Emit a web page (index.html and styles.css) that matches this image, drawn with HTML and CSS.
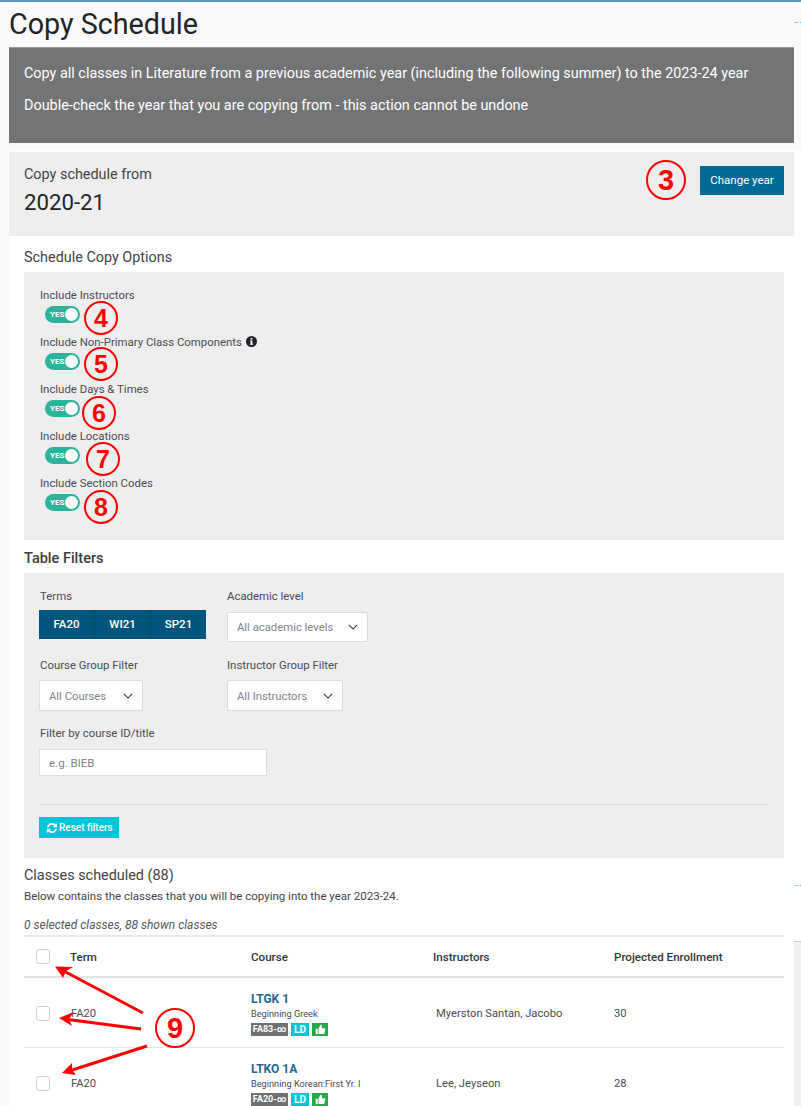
FILE: index.html

```html
<!DOCTYPE html>
<html lang="en">
<head>
    <meta charset="UTF-8">
    <title>Copy Schedule</title>
    <link rel="stylesheet" href="styles.css">
</head>
<body>
    <div class="page">
        <h1>Copy Schedule</h1>

        <div class="banner">
            <p>Copy all classes in Literature from a previous academic year (including the following summer) to the 2023-24 year</p>
            <p>Double-check the year that you are copying from - this action cannot be undone</p>
        </div>

        <div class="from-panel">
            <div>
                <div class="from-label">Copy schedule from</div>
                <div class="from-year">2020-21</div>
            </div>
            <button class="change-btn">Change year</button>
        </div>

        <div class="content">
            <h2 class="options-title">Schedule Copy Options</h2>
            <div class="box options-box">
                <div class="option">
                    <div class="field-label">Include Instructors</div>
                    <div class="toggle"><span>YES</span></div>
                </div>
                <div class="option">
                    <div class="field-label">Include Non-Primary Class Components
                        <svg class="info-icon" viewBox="0 0 11 11"><circle cx="5.5" cy="5.5" r="5.5" fill="#1f2124"/><rect x="4.6" y="2" width="1.8" height="1.6" fill="#fff"/><path d="M3.9 4.5h2.5v3.2h.8v1H3.9v-1h.8V5.500h-.8z" fill="#fff"/></svg>
                    </div>
                    <div class="toggle"><span>YES</span></div>
                </div>
                <div class="option">
                    <div class="field-label">Include Days &amp; Times</div>
                    <div class="toggle"><span>YES</span></div>
                </div>
                <div class="option">
                    <div class="field-label">Include Locations</div>
                    <div class="toggle"><span>YES</span></div>
                </div>
                <div class="option">
                    <div class="field-label">Include Section Codes</div>
                    <div class="toggle"><span>YES</span></div>
                </div>
            </div>

            <h2 class="filters-title">Table Filters</h2>
            <div class="box filters-box">
                <div class="filter-row first-row">
                    <div class="filter-col">
                        <div class="field-label">Terms</div>
                        <div class="term-group">
                            <span class="term">FA20</span>
                            <span class="term">WI21</span>
                            <span class="term">SP21</span>
                        </div>
                    </div>
                    <div class="filter-col">
                        <div class="field-label">Academic level</div>
                        <div class="select select-level">All academic levels
                            <svg class="chevron" viewBox="0 0 12 7"><path d="M1 1l5 5 5-5" fill="none" stroke="#333" stroke-width="1.300"/></svg>
                        </div>
                    </div>
                </div>
                <div class="filter-row second-row">
                    <div class="filter-col">
                        <div class="field-label">Course Group Filter</div>
                        <div class="select select-course">All Courses
                            <svg class="chevron" viewBox="0 0 12 7"><path d="M1 1l5 5 5-5" fill="none" stroke="#333" stroke-width="1.300"/></svg>
                        </div>
                    </div>
                    <div class="filter-col">
                        <div class="field-label">Instructor Group Filter</div>
                        <div class="select select-instructor">All Instructors
                            <svg class="chevron" viewBox="0 0 12 7"><path d="M1 1l5 5 5-5" fill="none" stroke="#333" stroke-width="1.300"/></svg>
                        </div>
                    </div>
                </div>
                <div class="field-label">Filter by course ID/title</div>
                <input class="search" type="text" placeholder="e.g. BIEB">
                <hr class="divider">
                <button class="reset-btn">
                    <svg class="reset-icon" viewBox="0 0 1536 1536"><path fill="#fff" d="M1511 928q0 5-1 7-64 268-268 434.500t-478 166.500q-146 0-282.500-55t-243.500-157l-129 129q-19 19-45 19t-45-19-19-45v-448q0-26 19-45t45-19h448q26 0 45 19t19 45-19 45l-137 137q71 66 161 102t187 36q134 0 250-65t186-179q11-17 53-117 8-23 30-23h192q13 0 22.500 9.500t9.500 22.500zm25-800v448q0 26-19 45t-45 19h-448q-26 0-45-19t-19-45 19-45l138-138q-148-137-349-137-134 0-250 65t-186 179q-11 17-53 117-8 23-30 23h-199q-13 0-22.500-9.500t-9.500-22.500v-7q65-268 270-434.500t480-166.500q146 0 284 55.500t245 156.500l130-129q19-19 45-19t45 19 19 45z"/></svg>
                    Reset filters
                </button>
            </div>

            <h2 class="classes-title">Classes scheduled (88)</h2>
            <p class="classes-note">Below contains the classes that you will be copying into the year 2023-24.</p>
            <p class="classes-count">0 selected classes, 88 shown classes</p>

            <table class="classes">
                <thead>
                    <tr>
                        <th class="col-check"><span class="check"></span></th>
                        <th class="col-term">Term</th>
                        <th class="col-course">Course</th>
                        <th class="col-instructor">Instructors</th>
                        <th>Projected Enrollment</th>
                    </tr>
                </thead>
                <tbody>
                    <tr>
                        <td><span class="check"></span></td>
                        <td class="term-cell">FA20</td>
                        <td class="course-cell">
                            <div class="course-id">LTGK 1</div>
                            <div class="course-name">Beginning Greek</div>
                            <div class="badges">
                                <span class="badge badge-term">FA83-∞</span>
                                <span class="badge badge-ld">LD</span>
                                <span class="badge badge-ok"><svg class="thumb" viewBox="0 0 16 16"><path fill="#fff" d="M1 7h3v8H1zM5 7l3-6c1.200 0 2 .8 2 2v3h4c.8 0 1.300.7 1.100 1.500l-1.300 6c-.1.6-.6 1-1.200 1H5z"/></svg></span>
                            </div>
                        </td>
                        <td class="instructor">Myerston Santan, Jacobo</td>
                        <td>30</td>
                    </tr>
                    <tr>
                        <td><span class="check"></span></td>
                        <td class="term-cell">FA20</td>
                        <td class="course-cell">
                            <div class="course-id">LTKO 1A</div>
                            <div class="course-name">Beginning Korean:First Yr. I</div>
                            <div class="badges">
                                <span class="badge badge-term">FA20-∞</span>
                                <span class="badge badge-ld">LD</span>
                                <span class="badge badge-ok"><svg class="thumb" viewBox="0 0 16 16"><path fill="#fff" d="M1 7h3v8H1zM5 7l3-6c1.200 0 2 .8 2 2v3h4c.8 0 1.300.7 1.100 1.500l-1.300 6c-.1.6-.6 1-1.200 1H5z"/></svg></span>
                            </div>
                        </td>
                        <td class="instructor">Lee, Jeyseon</td>
                        <td>28</td>
                    </tr>
                </tbody>
            </table>
        </div>
    </div>

    <!-- red callouts drawn on top of the screenshot -->
    <div class="mark mark-big mark-3">3</div>
    <div class="mark mark-4">4</div>
    <div class="mark mark-5">5</div>
    <div class="mark mark-6">6</div>
    <div class="mark mark-7">7</div>
    <div class="mark mark-8">8</div>
    <div class="mark mark-big mark-9">9</div>
    <svg class="arrows" viewBox="0 0 801 1106">
        <g stroke="#f00" stroke-width="3" fill="none">
            <path d="M143 1013L60 969"/>
            <path d="M141 1029L64 1019"/>
            <path d="M147 1046L66 1072"/>
        </g>
        <g fill="#f00">
            <path d="M55 966.500L73 967L66 971L63 978z"/>
            <path d="M59 1018L74 1012L69 1019L72 1026z"/>
            <path d="M62 1073L72 1063L72 1070L76 1075z"/>
        </g>
    </svg>
    <div class="edge-tick edge-tick-top"></div>
    <div class="edge-tick edge-tick-low"></div>
</body>
</html>
```

FILE: styles.css

```css
html, body {
    height: 1106px;
    overflow: hidden;
}
body {
    margin: 0;
    font-family: Roboto, Arial, sans-serif;
    font-size: 12px;
    color: #3d4045;
    border-top: 2px solid #5d97b9;
    box-sizing: border-box;
    background:
        linear-gradient(#c9c9c9, #c9c9c9) no-repeat 794px 941px / 7px 1px,
        linear-gradient(#f0f0f0, #f0f0f0) no-repeat 794px 941px,
        linear-gradient(#fafafa, #fafafa) no-repeat 0 0 / 10px 100%,
        linear-gradient(#fafafa, #fafafa) no-repeat 0 0 / 100% 150px,
        #fff;
}
.page {
    width: 785px;
    margin-left: 9px;
}
h1 {
    margin: 0;
    height: 45px;
    font-size: 28.700px;
    font-weight: 400;
    line-height: 44px;
    color: #212529;
}
.banner {
    height: 96px;
    box-sizing: border-box;
    padding: 18px 15px 0;
    background: #737476;
    border-top: 1px solid #999;
    color: #fff;
    font-size: 14.400px;
}
.banner p {
    margin: 0 0 16px;
    line-height: 16px;
}
.from-panel {
    display: flex;
    justify-content: space-between;
    align-items: flex-start;
    height: 84px;
    box-sizing: border-box;
    margin-top: 9px;
    padding: 14px 10px 0 15px;
    background: #eeeeee;
}
.from-label {
    padding-top: 1px;
    font-size: 14.400px;
    line-height: 16px;
    color: #42454a;
}
.from-year {
    margin-top: 6px;
    font-size: 22.200px;
    line-height: 26px;
    color: #212529;
}
.change-btn {
    width: 84px;
    height: 29px;
    padding: 0 0 2px;
    border: none;
    background: #006a96;
    color: #fff;
    font-family: inherit;
    font-size: 11.500px;
}
.content {
    padding: 0 10px 0 15px;
}
h2 {
    margin: 0;
    font-weight: 400;
    color: #42454a;
}
.options-title {
    padding-top: 14px;
    font-size: 14.400px;
    line-height: 16px;
}
.box {
    background: #eeeeee;
    box-sizing: border-box;
}
.options-box {
    height: 268px;
    margin-top: 6px;
    padding: 16px 15px 0;
}
.option {
    height: 47px;
}
.field-label {
    padding-left: 1px;
    font-size: 11.400px;
    line-height: 15px;
    color: #4a4d52;
}
.filter-col + .filter-col .field-label {
    padding-left: 0;
}
.info-icon {
    width: 11px;
    height: 11px;
    margin-left: 1px;
    vertical-align: -1px;
}
.toggle {
    display: flex;
    align-items: center;
    width: 35px;
    height: 17px;
    margin: 3px 0 0 6px;
    border-radius: 9px;
    background: #2bb39b;
    position: relative;
}
.toggle span {
    margin-left: 5px;
    font-size: 8px;
    font-weight: 700;
    color: #fff;
}
.toggle::after {
    content: "";
    position: absolute;
    right: 2px;
    top: 2px;
    width: 13px;
    height: 13px;
    border-radius: 50%;
    background: #fff;
}
.filters-title {
    padding-top: 11px;
    font-size: 14.500px;
    font-weight: 500;
    line-height: 16px;
    color: #3a3d42;
}
.filters-box {
    height: 285px;
    margin-top: 6px;
    padding: 16px 15px 0;
}
.filter-row {
    display: flex;
}
.filter-col {
    width: 188px;
}
.first-row {
    height: 69px;
}
.second-row {
    height: 68px;
}
.term-group {
    display: flex;
    width: 167px;
    height: 29px;
    margin-top: 6px;
    background: #00567a;
}
.term {
    flex: 1;
    text-align: center;
    font-size: 11.500px;
    line-height: 29px;
    color: #fff;
    font-weight: 500;
    border-left: 1px solid #004a6a;
}
.term:first-child {
    border-left: none;
}
.select {
    display: flex;
    justify-content: space-between;
    align-items: center;
    box-sizing: border-box;
    margin-top: 8px;
    padding: 0 9px 0 9px;
    background: #fff;
    border: 1px solid #d8dde3;
    border-radius: 2px;
    color: #80858b;
    font-size: 11.300px;
}
.select-level {
    width: 141px;
    height: 30px;
}
.select-course {
    width: 104px;
    height: 31px;
    margin-top: 7px;
    padding-top: 1px;
}
.select-instructor {
    width: 116px;
    height: 31px;
    margin-top: 7px;
    padding-top: 1px;
}
.chevron {
    width: 10px;
    height: 6px;
}
.search {
    display: block;
    width: 228px;
    height: 27px;
    box-sizing: border-box;
    margin-top: 8px;
    padding: 0 9px;
    border: 1px solid #d8dde3;
    font-family: inherit;
    font-size: 11.500px;
}
.search::placeholder {
    color: #80858b;
}
.divider {
    margin: 28px 0 12px;
    border: none;
    border-top: 1px solid #d5d6d8;
}
.reset-btn {
    display: flex;
    align-items: center;
    gap: 2px;
    width: 80px;
    height: 21px;
    padding: 0 0 0 8px;
    border: none;
    background: #00c4d8;
    color: #fff;
    font-family: inherit;
    font-size: 10px;
    font-weight: 500;
}
.reset-icon {
    width: 10px;
    height: 10px;
}
.classes-title {
    padding-top: 9px;
    font-size: 14.400px;
    line-height: 18px;
}
.classes-note {
    margin: 4px 0 0;
    font-size: 11.500px;
    line-height: 14px;
    color: #42454a;
}
.classes-count {
    margin: 15px 0 0;
    font-size: 12px;
    line-height: 14px;
    font-style: italic;
    color: #55585c;
}
.classes {
    width: 760px;
    margin-top: 3px;
    table-layout: fixed;
    border-collapse: collapse;
    border-top: 2px solid #e8eaed;
}
.classes th {
    height: 39px;
    padding: 0;
    text-align: left;
    font-size: 11.600px;
    font-weight: 500;
    color: #33363a;
    border-bottom: 2px solid #dfe2e6;
}
.classes td {
    height: 67px;
    padding: 2px 0 0;
    font-size: 11.200px;
    color: #4a4d52;
    border-bottom: 1px solid #e3e5ea;
}
.col-check {
    width: 46px;
}
.col-term {
    width: 181px;
}
.col-course {
    width: 182px;
}
.col-instructor {
    width: 181px;
}
.check {
    display: block;
    box-sizing: border-box;
    width: 14px;
    height: 15px;
    margin-left: 12px;
    border: 1px solid #ccd1d9;
    border-radius: 3px;
    background: #fff;
}
.classes th .check {
    margin-top: 0;
}
.classes .term-cell {
    padding-left: 1px;
}
.classes .course-cell {
    height: 66px;
    padding-top: 3px;
}
.course-id {
    font-size: 12px;
    font-weight: 700;
    line-height: 14px;
    color: #1a6a94;
}
.course-name {
    margin-top: 2px;
    font-size: 9.200px;
    line-height: 12px;
    color: #4a4d52;
}
.badges {
    display: flex;
    gap: 3px;
    margin-top: 3px;
}
.badge {
    display: block;
    height: 13px;
    line-height: 13px;
    text-align: center;
    font-size: 9px;
    font-weight: 700;
    color: #fff;
}
.badge-term {
    width: 37px;
    background: #6f7072;
}
.badge-ld {
    width: 18px;
    font-size: 10px;
    background: #00c4d8;
}
.badge-ok {
    width: 16px;
    background: #28a745;
}
.thumb {
    display: block;
    width: 11px;
    height: 11px;
    margin: 1px auto;
}
.classes .instructor {
    padding-left: 3px;
}
.mark {
    position: absolute;
    box-sizing: border-box;
    width: 34px;
    height: 34px;
    border: 2px solid #f00;
    border-radius: 50%;
    color: #f00;
    font-family: "Liberation Sans", Arial, sans-serif;
    font-size: 25px;
    font-weight: 700;
    line-height: 30px;
    text-align: center;
}
.mark-big {
    width: 40px;
    height: 40px;
    font-size: 29px;
    line-height: 36px;
}
.mark-3 { left: 646px; top: 160px; }
.mark-4 { left: 84px; top: 301px; }
.mark-5 { left: 84px; top: 347px; }
.mark-6 { left: 82px; top: 396px; }
.mark-7 { left: 86px; top: 442px; }
.mark-8 { left: 84px; top: 490px; }
.mark-9 { left: 155px; top: 1008px; }
.arrows {
    position: absolute;
    left: 0;
    top: 0;
    width: 801px;
    height: 1106px;
}
.edge-tick {
    position: absolute;
    left: 795px;
    width: 6px;
    border-top: 1px dotted #5cc4ee;
}
.edge-tick-top { top: 22px; }
.edge-tick-low { top: 885px; }
```
